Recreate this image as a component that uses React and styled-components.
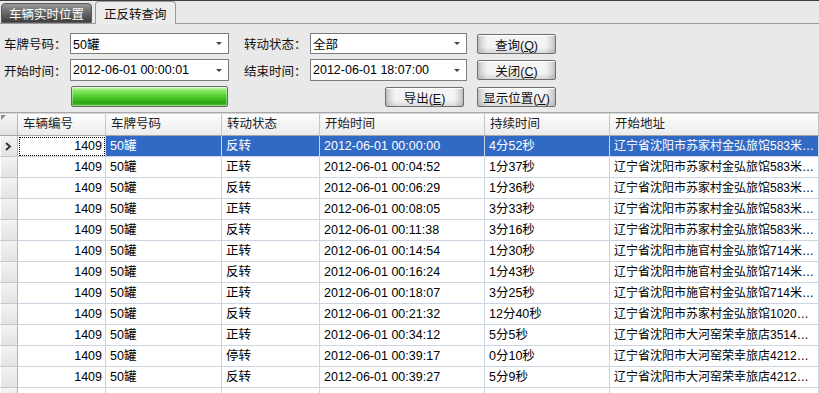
import styled, { createGlobalStyle } from 'styled-components';

const GlobalStyle = createGlobalStyle`
  html, body {
    margin: 0;
    padding: 0;
    background: #e9e9e9;
  }
  body {
    font-family: 'Liberation Sans', 'Noto Sans CJK SC', sans-serif;
    font-size: 12px;
    color: #000;
  }
`;

const Window = styled.div`
  width: 819px;
  height: 393px;
  overflow: hidden;
  border-top: 1px solid #3f3f3f;
  box-sizing: border-box;
  background: #e9e9e9;
  display: flex;
  flex-direction: column;
`;

const TabStrip = styled.div`
  height: 22px;
  border-bottom: 1px solid #9a9a9a;
  display: flex;
  align-items: flex-end;
  gap: 3px;
  padding-left: 1px;
`;

const Tab = styled.div`
  height: ${(p) => (p.$active ? '23px' : '20px')};
  margin-bottom: ${(p) => (p.$active ? '-1px' : '0')};
  padding: 0 ${(p) => (p.$active ? '8px' : '7px')};
  box-sizing: border-box;
  display: flex;
  align-items: center;
  border-radius: 4px 4px 0 0;
  border: 1px solid ${(p) => (p.$active ? '#9a9a9a' : '#5a5a5a')};
  border-bottom: ${(p) => (p.$active ? 'none' : '1px solid #5a5a5a')};
  background: ${(p) =>
    p.$active
      ? '#ececec'
      : 'linear-gradient(#9a9a9a 0%, #6a6a6a 45%, #3e3e3e 100%)'};
  color: ${(p) => (p.$active ? '#111' : '#fff')};
  font-size: 12.5px;
  padding-top: ${(p) => (p.$active ? '1px' : '0')};
`;

const FormPanel = styled.div`
  height: 89px;
  box-sizing: border-box;
  padding: 9px 0 0 4px;
  border-bottom: 1px solid #a8a8a8;
`;

const FormGrid = styled.div`
  display: grid;
  grid-template-columns: 66px 159px 81px 157px 10px 80px;
  grid-template-rows: 21px 22px 21px;
  row-gap: 5px;
  align-items: center;
`;

const Label = styled.div`
  padding-left: ${(p) => (p.$indent ? '15px' : '0')};
  white-space: nowrap;
  color: #111;
  font-size: 12.5px;
`;

const Combo = styled.div`
  height: ${(p) => (p.$tall ? '22px' : '21px')};
  box-sizing: border-box;
  background: #fff;
  border: 1px solid #7c7c7c;
  display: flex;
  align-items: center;
  justify-content: space-between;
  padding: 0 6px 0 2px;
  font-size: 12.5px;
`;

const Arrow = styled.span`
  width: 0;
  height: 0;
  border-left: 3px solid transparent;
  border-right: 3px solid transparent;
  border-top: 3px solid #444;
`;

const Button = styled.button`
  grid-column: ${(p) => p.$col};
  justify-self: ${(p) => (p.$end ? 'end' : 'stretch')};
  margin-right: ${(p) => (p.$end ? '3px' : '0')};
  width: 79px;
  height: 20px;
  padding: 0;
  font-family: inherit;
  font-size: 12.5px;
  color: #111;
  border: 1px solid #6f6f6f;
  border-radius: 2px;
  background: linear-gradient(
    to right,
    #c9c9c9 0%,
    #f4f4f4 12%,
    #f4f4f4 88%,
    #c9c9c9 100%
  );
  box-shadow: inset 0 1px 0 #fff, inset 0 -3px 4px rgba(0, 0, 0, 0.12);
`;

const Progress = styled.div`
  grid-column: 2;
  margin-left: 1px;
  width: 157px;
  height: 21px;
  box-sizing: border-box;
  border: 1px solid #6b6b6b;
  border-radius: 2px;
  background: linear-gradient(
    #d7f8c6 0%,
    #8ae86a 18%,
    #4ed12c 50%,
    #2aa511 82%,
    #56c83a 100%
  );
  box-shadow: inset 0 0 0 1px rgba(255, 255, 255, 0.35);
`;

const GridWrap = styled.div`
  flex: 1;
  background: #fff;
  border-top: 1px solid #d6d6d6;
  overflow: hidden;
`;

const Table = styled.table`
  width: 819px;
  table-layout: fixed;
  border-collapse: separate;
  border-spacing: 0;
`;

const Th = styled.th`
  height: 21px;
  line-height: 21px;
  padding: 0 0 0 5px;
  text-align: left;
  font-weight: normal;
  font-size: 12.5px;
  color: #222;
  white-space: nowrap;
  background: linear-gradient(#fdfdfd, #ececec);
  border-right: 1px solid #c6c6c6;
  border-bottom: 1px solid #a5a5a5;
`;

const Corner = styled.th`
  height: 21px;
  padding: 0;
  position: relative;
  background: linear-gradient(#f6f6f6, #e2e2e2);
  border-right: 1px solid #b5b5b5;
  border-bottom: 1px solid #a5a5a5;
  &::before {
    content: '';
    position: absolute;
    left: 1px;
    top: 1px;
    border-top: 5px solid #8a8a8a;
    border-right: 5px solid transparent;
  }
`;

const RowHead = styled.td`
  height: 20px;
  padding: 0 0 0 4px;
  line-height: 20px;
  text-align: left;
  background: linear-gradient(#f3f3f3, #e3e3e3);
  border-right: 1px solid #b5b5b5;
  border-bottom: 1px solid #c9c9c9;
  box-shadow: inset 1px 0 0 #fff;
  svg {
    display: block;
  }
`;

const Td = styled.td`
  height: 20px;
  line-height: 20px;
  vertical-align: middle;
  padding: 0 ${(p) => (p.$right ? '3px' : '0')} 0 4px;
  text-align: ${(p) => (p.$right ? 'right' : 'left')};
  font-size: ${(p) => (p.$small ? '12px' : '12.5px')};
  white-space: nowrap;
  overflow: hidden;
  background: ${(p) => (p.$sel ? '#316ac5' : '#fff')};
  color: ${(p) => (p.$sel ? '#fff' : '#000')};
  border-right: 1px solid #ccd5e2;
  border-bottom: 1px solid #ccd5e2;
  outline: ${(p) => (p.$focus ? '1px dotted #000' : 'none')};
  outline-offset: -2px;
`;

const rows = [
  ['反转', '00:00:00', '4分52秒', '苏家村金弘旅馆583米…'],
  ['正转', '00:04:52', '1分37秒', '苏家村金弘旅馆583米…'],
  ['反转', '00:06:29', '1分36秒', '苏家村金弘旅馆583米…'],
  ['正转', '00:08:05', '3分33秒', '苏家村金弘旅馆583米…'],
  ['反转', '00:11:38', '3分16秒', '苏家村金弘旅馆583米…'],
  ['正转', '00:14:54', '1分30秒', '施官村金弘旅馆714米…'],
  ['反转', '00:16:24', '1分43秒', '施官村金弘旅馆714米…'],
  ['正转', '00:18:07', '3分25秒', '施官村金弘旅馆714米…'],
  ['反转', '00:21:32', '12分40秒', '苏家村金弘旅馆1020…'],
  ['正转', '00:34:12', '5分5秒', '大河窑荣幸旅店3514…'],
  ['停转', '00:39:17', '0分10秒', '大河窑荣幸旅店4212…'],
  ['反转', '00:39:27', '5分9秒', '大河窑荣幸旅店4212…'],
];

const columns = ['车辆编号', '车牌号码', '转动状态', '开始时间', '持续时间', '开始地址'];
const widths = [18, 88, 116, 98, 165, 125, 209];

const App = () => {
  return (
    <>
      <GlobalStyle />
      <Window>
        <TabStrip>
          <Tab>车辆实时位置</Tab>
          <Tab $active>正反转查询</Tab>
        </TabStrip>

        <FormPanel>
          <FormGrid>
            <Label>车牌号码：</Label>
            <Combo>
              50罐
              <Arrow />
            </Combo>
            <Label $indent>转动状态：</Label>
            <Combo>
              全部
              <Arrow />
            </Combo>
            <Button $col={6}>
              查询(<u>Q</u>)
            </Button>

            <Label>开始时间：</Label>
            <Combo $tall>
              2012-06-01 00:00:01
              <Arrow />
            </Combo>
            <Label $indent>结束时间：</Label>
            <Combo $tall>
              2012-06-01 18:07:00
              <Arrow />
            </Combo>
            <Button $col={6}>
              关闭(<u>C</u>)
            </Button>

            <Progress />
            <Button $col={4} $end>
              导出(<u>E</u>)
            </Button>
            <Button $col={6}>
              显示位置(<u>V</u>)
            </Button>
          </FormGrid>
        </FormPanel>

        <GridWrap>
          <Table>
            <colgroup>
              {widths.map((w, i) => (
                <col key={i} style={{ width: w }} />
              ))}
            </colgroup>
            <thead>
              <tr>
                <Corner />
                {columns.map((c) => (
                  <Th key={c}>{c}</Th>
                ))}
              </tr>
            </thead>
            <tbody>
              {rows.map((r, i) => {
                const sel = i === 0;
                return (
                  <tr key={i}>
                    <RowHead>
                      {sel && (
                        <svg width="8" height="9" viewBox="0 0 8 9">
                          <path d="M2 1 L6 4.5 L2 8" fill="none" stroke="#333" strokeWidth="2" />
                        </svg>
                      )}
                    </RowHead>
                    <Td $right $focus={sel}>
                      1409
                    </Td>
                    <Td $sel={sel}>50罐</Td>
                    <Td $sel={sel}>{r[0]}</Td>
                    <Td $sel={sel}>2012-06-01 {r[1]}</Td>
                    <Td $sel={sel}>{r[2]}</Td>
                    <Td $sel={sel} $small>
                      辽宁省沈阳市{r[3]}
                    </Td>
                  </tr>
                );
              })}
              <tr>
                <RowHead />
                <Td />
                <Td />
                <Td />
                <Td />
                <Td />
                <Td />
              </tr>
            </tbody>
          </Table>
        </GridWrap>
      </Window>
    </>
  );
};

export default App;
